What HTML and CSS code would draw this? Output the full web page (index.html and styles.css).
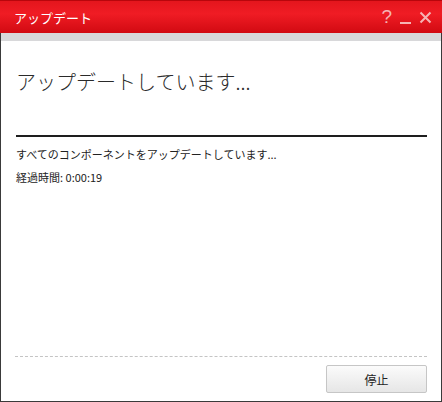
FILE: index.html
```html
<!DOCTYPE html>
<html>
<head>
    <title>アップデート</title>
    <meta charset="utf-8">
    <link rel="stylesheet" href="styles.css">
</head>
<body>
    <div class="window">
        <div class="titlebar">
            <span class="title">アップデート</span>
            <div class="controls">
                <span class="ctrl help">?</span>
                <span class="ctrl minimize"></span>
                <svg class="ctrl close" width="13" height="13" viewBox="0 0 13 13">
                    <path d="M1.5 1.5 L11.5 11.5 M11.5 1.5 L1.5 11.5" stroke="#f6b3b3" stroke-width="2" fill="none"/>
                </svg>
            </div>
        </div>
        <div class="strip"></div>

        <div class="content">
            <h1 class="heading">アップデートしています...</h1>
            <div class="progress"></div>
            <p class="status">すべてのコンポーネントをアップデートしています...</p>
            <p class="status">経過時間: 0:00:19</p>
        </div>

        <div class="footer">
            <button class="stop-btn">停止</button>
        </div>
    </div>
</body>
</html>
```

FILE: styles.css
```css
body {
    margin: 0;
    font-family: "Noto Sans CJK JP", "Noto Sans", sans-serif;
    background-color: white;
}
.window {
    width: 442px;
    height: 402px;
    box-sizing: border-box;
    border: 1px solid #3a3a3a;
    border-top: none;
    display: flex;
    flex-direction: column;
    background-color: white;
}
.titlebar {
    height: 33px;
    margin: 0 -1px;
    padding: 0 10px 0 14px;
    display: flex;
    align-items: center;
    justify-content: space-between;
    background: linear-gradient(#e4161d, #f01c24 40%, #d10a12);
    border-top: 1px solid #b8060c;
    box-sizing: border-box;
}
.title {
    color: white;
    font-size: 13px;
    padding-top: 1px;
}
.controls {
    display: flex;
    align-items: center;
    gap: 8px;
}
.ctrl {
    color: #f6b3b3;
}
.help {
    font-family: "Liberation Sans", sans-serif;
    font-size: 19px;
    line-height: 18px;
}
.minimize {
    width: 11px;
    height: 2px;
    margin-top: 12px;
    background-color: #f6b3b3;
}
.strip {
    height: 8px;
    background-color: #d8d8da;
}
.content {
    flex: 1;
    padding: 27px 14px 0 15px;
}
.heading {
    margin: 0;
    font-size: 20px;
    font-weight: 300;
    color: #2a2a2a;
    line-height: 28px;
}
.progress {
    height: 2px;
    margin-top: 39px;
    background-color: #1e1e1e;
}
.status {
    margin: 10px 0 0;
    font-size: 11px;
    line-height: 14px;
    color: #222;
}
.status + .status {
    margin-top: 9px;
}
.footer {
    margin: 0 14px 8px 14px;
    padding-top: 8px;
    border-top: 1px dashed #c4c4c4;
    display: flex;
    justify-content: flex-end;
}
.stop-btn {
    width: 101px;
    height: 28px;
    font-family: inherit;
    font-size: 12px;
    color: #222;
    background: linear-gradient(#fbfbfb, #e6e6e6);
    border: 1px solid #c6c6c6;
    border-radius: 2px;
}
```
